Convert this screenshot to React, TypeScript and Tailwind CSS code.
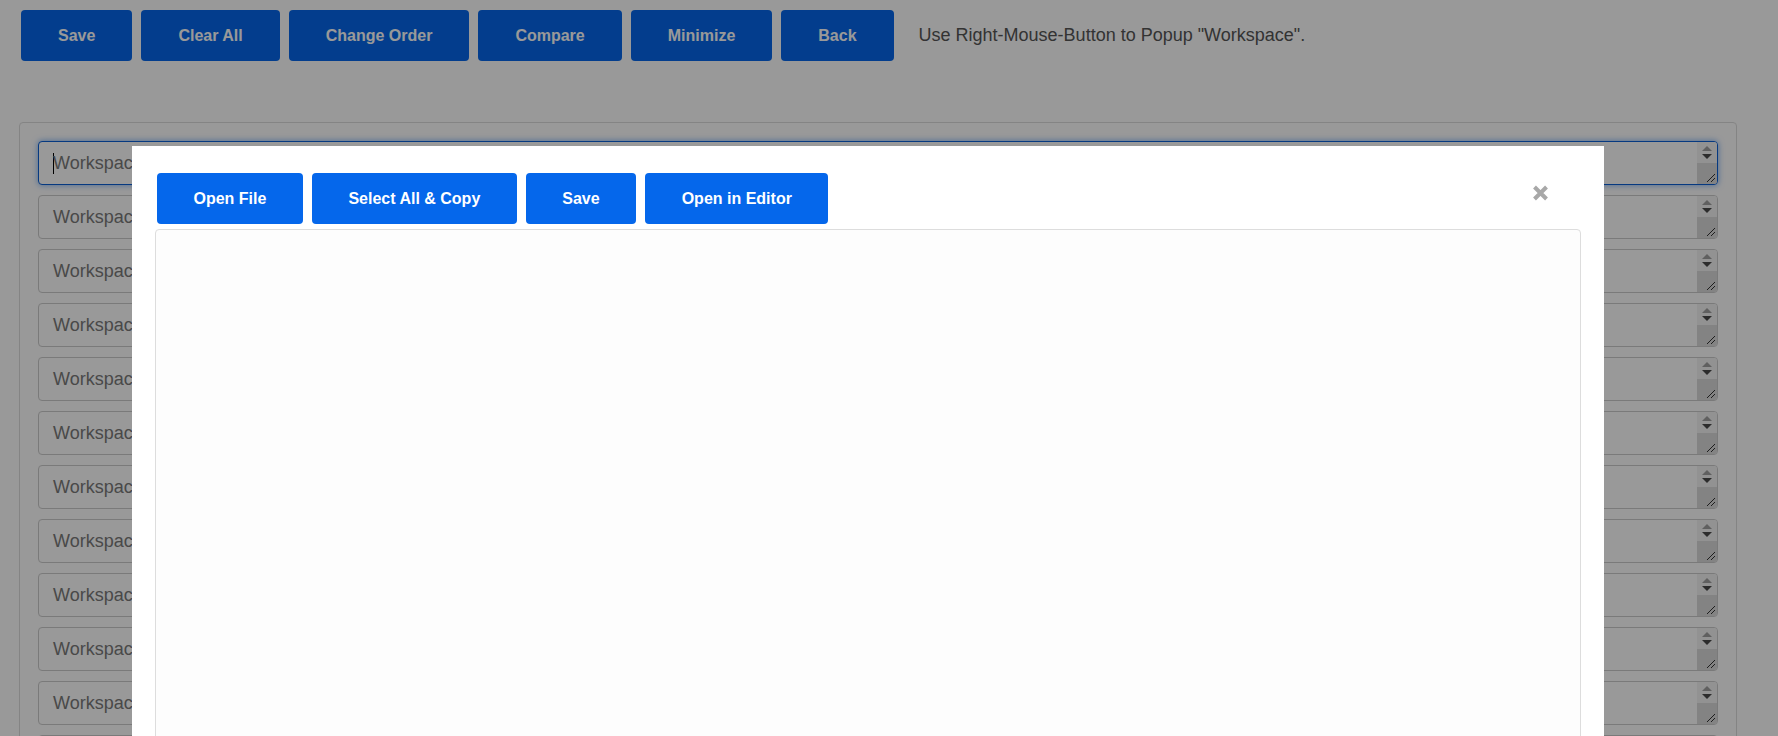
import React from "react";

function Btn({ label, small }: { label: string; small?: boolean }) {
  return (
    <button
      className={
        "h-[51px] rounded-[4px] bg-[#0567eb] text-white font-bold text-[16px] leading-none whitespace-nowrap " +
        (small ? "px-[36.5px]" : "px-[37px]")
      }
    >
      {label}
    </button>
  );
}

function ScrollCol() {
  return (
    <div className="flex flex-col w-[20px] shrink-0">
      <div className="flex-1 bg-[#f4f4f4] flex flex-col items-center justify-center gap-[3px]">
        <svg width="10" height="5" viewBox="0 0 10 5">
          <path d="M5 0 L10 5 L0 5 Z" fill="#a0a0a0" />
        </svg>
        <svg width="10" height="5" viewBox="0 0 10 5">
          <path d="M0 0 L10 0 L5 5 Z" fill="#4a4a4a" />
        </svg>
      </div>
      <div className="flex-1 bg-[#dadada] flex items-end justify-end">
        <svg width="11" height="11" viewBox="0 0 11 11" className="mr-[1px] mb-[1px]">
          <path d="M10 2 L2 10 M10 6 L6 10" stroke="#333" strokeWidth="1" />
        </svg>
      </div>
    </div>
  );
}

function Row({ n, focused }: { n: number; focused?: boolean }) {
  return (
    <div
      className={
        "h-[44px] shrink-0 rounded-[4px] border bg-white flex items-stretch overflow-hidden " +
        (focused
          ? "border-[#0a5fd6] shadow-[0_0_6px_rgba(5,103,235,0.55)]"
          : "border-[#cccccc]")
      }
    >
      <div className="flex-1 flex items-center pl-[14px] text-[18px] text-[#7a7a7a]">
        {focused && <span className="inline-block w-px h-[21px] bg-black mr-[-1px]" />}
        <span>Workspace {n}</span>
      </div>
      <ScrollCol />
    </div>
  );
}

export default function App() {
  const rows = Array.from({ length: 12 }, (_, i) => i + 1);
  return (
    <div className="relative min-h-screen h-[736px] overflow-hidden bg-white font-['Liberation_Sans',Arial,sans-serif]">
      <div className="flex items-center pt-[10px] pl-[21px] gap-[9px]">
        <Btn label="Save" />
        <Btn label="Clear All" />
        <Btn label="Change Order" />
        <Btn label="Compare" />
        <Btn label="Minimize" />
        <Btn label="Back" />
        <span className="ml-[16px] text-[18px] text-[#555555] whitespace-nowrap">
          Use Right-Mouse-Button to Popup "Workspace".
        </span>
      </div>

      <div className="ml-[19px] mt-[61px] w-[1718px] border border-[#dddddd] rounded-[4px] p-[18px] flex flex-col gap-[10px]">
        {rows.map((n) => (
          <Row key={n} n={n} focused={n === 1} />
        ))}
      </div>

      <div className="fixed inset-0 bg-black/40" />

      <div className="absolute left-[132px] top-[146px] w-[1472px] h-[700px] bg-white pt-[27px] px-[23px]">
        <div className="flex gap-[9px] pl-[2px]">
          <Btn small label="Open File" />
          <Btn small label="Select All & Copy" />
          <Btn small label="Save" />
          <Btn small label="Open in Editor" />
        </div>
        <div className="mt-[5px] h-[600px] border border-[#dddddd] rounded-[4px] bg-[#fdfdfd]" />
        <svg
          className="absolute right-[55px] top-[39px]"
          width="17"
          height="16"
          viewBox="0 0 17 16"
        >
          <path d="M2.5 2 L14.5 14 M14.5 2 L2.5 14" stroke="#a8a8a8" strokeWidth="4" />
        </svg>
      </div>
    </div>
  );
}
